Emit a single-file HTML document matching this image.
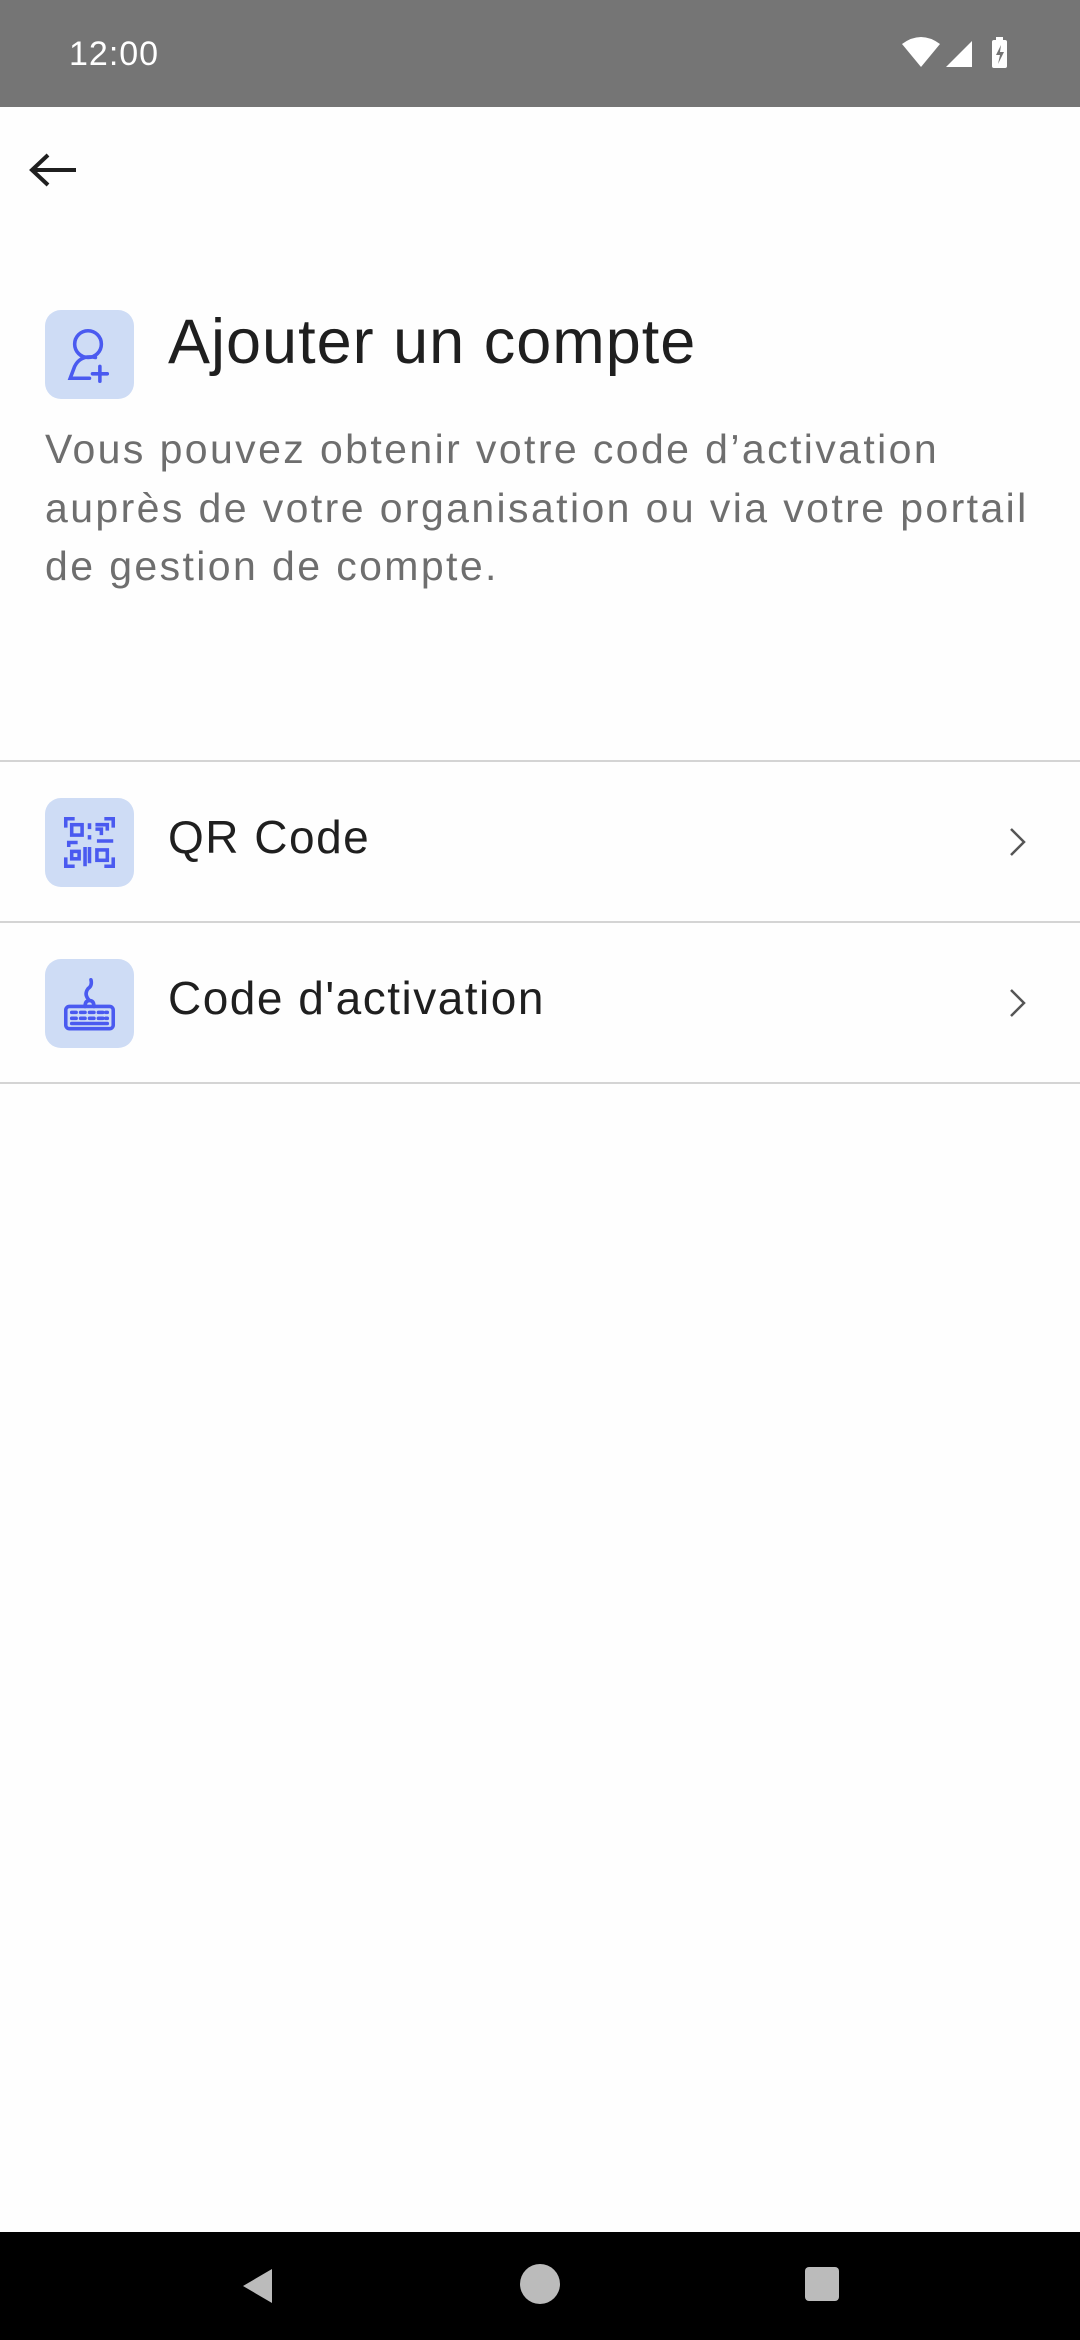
<!DOCTYPE html>
<html><head><meta charset="utf-8"><style>
*{margin:0;padding:0;box-sizing:border-box}
body{width:1080px;height:2340px;background:#fefefe;font-family:"Liberation Sans",sans-serif;position:relative;overflow:hidden}
.status{position:absolute;left:0;top:0;width:1080px;height:107px;background:#757575}
.time{position:absolute;left:69px;top:35px;color:#fff;font-size:34px;letter-spacing:1px}
.nav{position:absolute;left:0;top:2232px;width:1080px;height:108px;background:#000}
.ibox{position:absolute;width:89px;height:89px;border-radius:16px;background:#cedcf5}
.title{position:absolute;left:168px;top:306px;font-size:63px;color:#1f1f1f;white-space:nowrap;letter-spacing:1px}
.desc{position:absolute;left:45px;top:420px;width:1025px;font-size:41px;line-height:58.5px;color:#6e6e6e;letter-spacing:2.4px}
.div{position:absolute;left:0;width:1080px;height:2px;background:#d4d4d4}
.rt{position:absolute;left:168px;font-size:46px;color:#1f1f1f;white-space:nowrap;letter-spacing:1.5px}
</style></head><body>
<div class="status"><div class="time">12:00</div>
<svg style="position:absolute;left:900px;top:36px" width="120" height="36" viewBox="0 0 120 36">
<path d="M2 8 Q21 -6 40 8 L21 31 Z" fill="#fff"/>
<path d="M46 31 L72 5 L72 31 Z" fill="#fff"/>
<rect x="92" y="4" width="15" height="28" rx="2" fill="#fff"/><rect x="96" y="1" width="7" height="4" fill="#fff"/>
<path d="M101 9 L96 19 L100 19 L98 28 L104 16 L100 16 Z" fill="#757575"/>
</svg></div>
<svg style="position:absolute;left:28px;top:150px" width="52" height="40" viewBox="0 0 52 40"><path d="M48 20 H4 M20 5 L4 20 L20 35" stroke="#1f1f1f" stroke-width="4" fill="none"/></svg>

<div class="ibox" style="left:45px;top:310px"><svg width="89" height="89" viewBox="0 0 60 60" fill="none" stroke="#4a5af0" stroke-width="2.4" stroke-linecap="round">
<circle cx="29" cy="23" r="9"/><path d="M34 32 Q24 30 20 38 L17 46 H30"/><path d="M37 38 V48 M32 43 H42"/></svg></div>
<div class="title">Ajouter un compte</div>
<div class="desc">Vous pouvez obtenir votre code d’activation auprès de votre organisation ou via votre portail de gestion de compte.</div>

<div class="div" style="top:760px"></div>
<div class="ibox" style="left:45px;top:798px"><svg width="89" height="89" viewBox="0 0 60 60" fill="none" stroke="#4a5af0" stroke-width="2.4">
<path d="M14 20 V14 H20 M40 14 H46 V20 M14 40 V46 H20 M46 40 V46 H40"/>
<rect x="18" y="18" width="7" height="7"/><rect x="35" y="35" width="7" height="7"/><rect x="18" y="36" width="5" height="5"/>
<path d="M30 17 V21 M34 18 H42 V22 M34 21 H38 V25 M30 25 V28 M35 29 H46 M22 30 H16 V33 M27 33 V46 M30 33 V44"/></svg></div>
<div class="rt" style="top:810px">QR Code</div>
<svg style="position:absolute;left:1006px;top:826px" width="24" height="32" viewBox="0 0 24 32"><path d="M5 3 L18 16 L5 29" stroke="#555" stroke-width="2.5" fill="none"/></svg>

<div class="div" style="top:921px"></div>
<div class="ibox" style="left:45px;top:959px"><svg width="89" height="89" viewBox="0 0 60 60" fill="none" stroke="#4a5af0" stroke-width="2.4" stroke-linecap="round">
<rect x="14" y="32" width="32" height="15" rx="2.5"/><path d="M27 32 Q27 28 30 28 Q33 28 33 32 M30 28 Q26 24 29 20 Q32 18 31 14"/>
<path d="M18 36 H21 M24 36 H27 M30 36 H33 M36 36 H39 M41 36 H42 M18 40 H21 M24 40 H27 M30 40 H33 M36 40 H39 M41 40 H42 M18 43.5 H42"/></svg></div>
<div class="rt" style="top:971px">Code d'activation</div>
<svg style="position:absolute;left:1006px;top:987px" width="24" height="32" viewBox="0 0 24 32"><path d="M5 3 L18 16 L5 29" stroke="#555" stroke-width="2.5" fill="none"/></svg>
<div class="div" style="top:1082px"></div>

<div class="nav">
<svg style="position:absolute;left:238px;top:34px" width="40" height="40" viewBox="0 0 40 40"><path d="M34 3 L34 37 L5 20 Z" fill="#bbb"/></svg>
<div style="position:absolute;left:520px;top:32px;width:40px;height:40px;border-radius:50%;background:#bbb"></div>
<div style="position:absolute;left:805px;top:35px;width:34px;height:34px;border-radius:4px;background:#bbb"></div>
</div>
</body></html>
